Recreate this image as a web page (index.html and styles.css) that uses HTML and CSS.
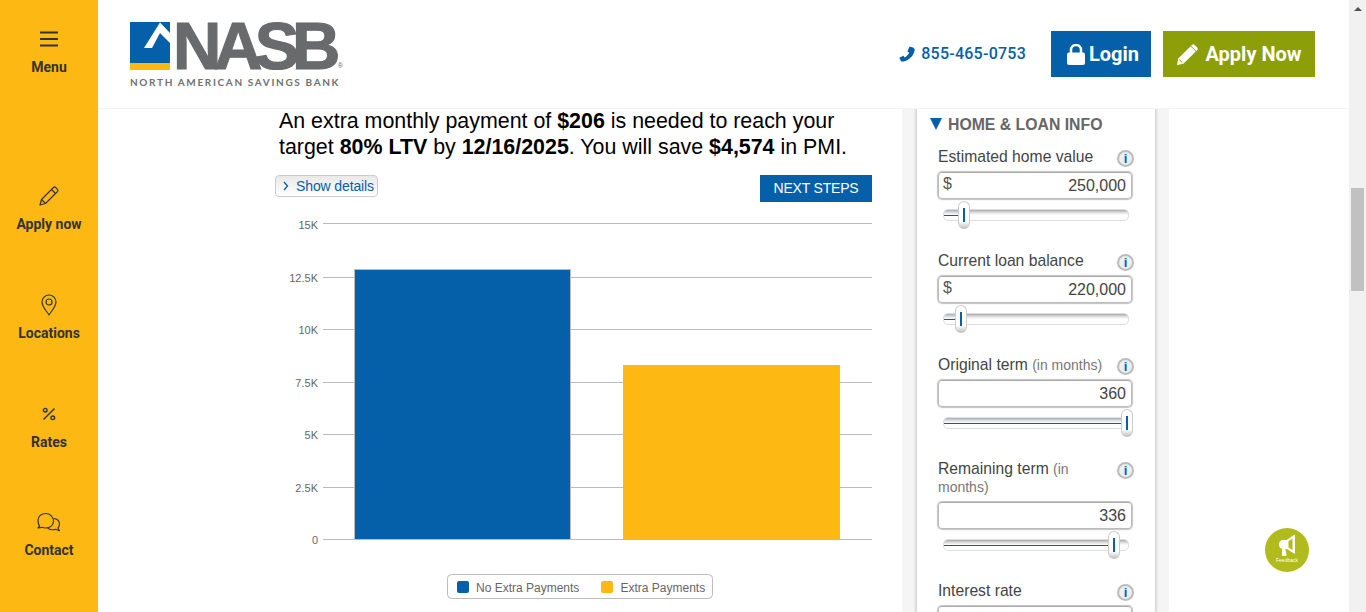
FILE: index.html
```html
<!DOCTYPE html>
<html lang="en">
<head>
<meta charset="UTF-8">
<meta name="viewport" content="width=device-width, initial-scale=1.0">
<title>PMI Calculator - NASB</title>
<link rel="stylesheet" href="styles.css">
</head>
<body>

<!-- Left rail -->
<nav class="rail">
    <a class="rail-item rail-menu">
        <span class="rail-icon"><svg width="18" height="16" viewBox="0 0 18 16"><path d="M0 1.500h18M0 8h18M0 14.500h18" fill="none" stroke="#333" stroke-width="2"/></svg></span>
        <span>Menu</span>
    </a>
    <a class="rail-item">
        <span class="rail-icon"><svg width="22" height="22" viewBox="0 0 22 22" fill="none" stroke="#333" stroke-width="1.200" stroke-linejoin="round"><path d="M2 20l1.500-5.500L15.500 2.500a1.600 1.600 0 0 1 2.200 0l1.800 1.800a1.600 1.600 0 0 1 0 2.200L7.500 18.500z"/><path d="M13.500 4.500l4 4M3.500 14.500l4 4"/></svg></span>
        <span>Apply now</span>
    </a>
    <a class="rail-item">
        <span class="rail-icon"><svg width="16" height="22" viewBox="0 0 16 22" fill="none" stroke="#333" stroke-width="1.200"><path d="M8 20.800C5 16.500 1 12.500 1 8a7 7 0 0 1 14 0c0 4.500-4 8.500-7 12.800z"/><circle cx="8" cy="8" r="3"/></svg></span>
        <span>Locations</span>
    </a>
    <a class="rail-item">
        <span class="rail-icon"><svg width="14" height="14" viewBox="0 0 14 14" fill="none" stroke="#333" stroke-width="1.400"><path d="M1.500 12.500L12.500 1.500"/><circle cx="3.200" cy="3.200" r="1.800"/><circle cx="10.800" cy="10.800" r="1.800"/></svg></span>
        <span>Rates</span>
    </a>
    <a class="rail-item">
        <span class="rail-icon"><svg width="24" height="20" viewBox="0 0 24 20" fill="none" stroke="#333" stroke-width="1.200" stroke-linejoin="round"><path d="M2.500 14.200l-1.500 1.800 4-.7c1.300.5 2.500.7 3.800.7 4.400 0 7.700-2.700 7.700-6.800S13.200 1.500 8.800 1.500 1 4.300 1 8.200c0 2.400.5 4.400 1.500 6z"/><path d="M16.300 6.500c3.300.3 6.200 2.300 6.200 5.500 0 1.700-.6 3-1.500 4.200l1.500 2.600-4-1.500c-2.800.8-6.500.2-8.500-2"/></svg></span>
        <span>Contact</span>
    </a>
</nav>

<div class="page">

    <!-- Header -->
    <header class="top">
        <a class="logo">
            <div class="logo-row">
                <svg class="logo-mark" width="40" height="48" viewBox="0 0 40 48"><rect width="40" height="41" fill="#055fa9"/><rect y="41" width="40" height="7" fill="#fdb813"/><path d="M30 .5L40 11v10L30 11 22 26h-8z" fill="#fff"/></svg>
                <span class="logo-word">NASB</span>
                <span class="logo-reg">®</span>
            </div>
            <div class="logo-sub">NORTH AMERICAN SAVINGS BANK</div>
        </a>
        <div class="top-actions">
            <a class="phone">
                <svg width="16" height="16" viewBox="0 0 16 16"><path d="M15.700 2.900c0 2.900-1.300 5.800-3.400 8-2.200 2.300-5 4-8 4.500-.7.100-1.400.200-2.100.100L.5 12.300c-.1-.3 0-.5.200-.7l3.200-1.700c.3-.100.500 0 .7.200l1 1.500c1.800-.9 3.700-2.900 4.600-4.800L8.800 5.800c-.2-.2-.3-.4-.2-.7L10.300 1.100c.1-.3.400-.4.700-.3l3.200.8c.3.100.5.300.6.600z" fill="#055fa9"/></svg>
                <span>855-465-0753</span>
            </a>
            <a class="btn btn-login">
                <svg width="18" height="21" viewBox="0 0 18 21"><path d="M4 9V6a5 5 0 0 1 10 0v3" fill="none" stroke="#fff" stroke-width="2.500"/><rect y="8.500" width="18" height="12.500" rx="2" fill="#fff"/></svg>
                <span>Login</span>
            </a>
            <a class="btn btn-apply">
                <svg width="21" height="21" viewBox="0 0 21 21"><path d="M0 21l1.200-6.400L13.600 2.200l5.200 5.200L6.400 19.800z" fill="#fff"/><path d="M15 .8a1.800 1.800 0 0 1 2.500 0l2.700 2.700a1.800 1.800 0 0 1 0 2.500L19.300 7l-5.300-5.300z" fill="#fff"/><path d="M2.200 15.500l3.300 3.300" stroke="#8c9e08" stroke-width="1"/></svg>
                <span>Apply Now</span>
            </a>
        </div>
    </header>

    <div class="content">

        <!-- Results -->
        <main class="results">
            <p class="summary">An extra monthly payment of <b>$206</b> is needed to reach your<br>target <b>80% LTV</b> by <b>12/16/2025</b>. You will save <b>$4,574</b> in PMI.</p>
            <div class="result-actions">
                <a class="details-btn"><svg width="6" height="10" viewBox="0 0 6 10"><path d="M1 1l3.500 4L1 9" fill="none" stroke="#055fa9" stroke-width="1.300"/></svg>Show details</a>
                <a class="next-btn">NEXT STEPS</a>
            </div>
            <svg class="chart" width="597" height="385" viewBox="275 215 597 385">
                <g stroke="#bbb" stroke-width="1">
                    <path d="M323 223.500h549M323 277.500h549M323 329.500h549M323 382.500h549M323 434.500h549M323 487.500h549M323 539.500h549"/>
                </g>
                <rect x="354.500" y="269.500" width="216" height="270" fill="#055fa9" stroke="#bbb" stroke-width="1"/>
                <rect x="623.500" y="365.500" width="216" height="174" fill="#fdb813" stroke="#bbb" stroke-width="1"/>
                <g class="chart-ticks" text-anchor="end">
                    <text x="318" y="229">15K</text>
                    <text x="318" y="282">12.5K</text>
                    <text x="318" y="334">10K</text>
                    <text x="318" y="387">7.5K</text>
                    <text x="318" y="439">5K</text>
                    <text x="318" y="492">2.5K</text>
                    <text x="318" y="544">0</text>
                </g>
                <rect x="447.500" y="574.500" width="265" height="24" rx="4" fill="#fff" stroke="#bbb"/>
                <rect x="457" y="581" width="12" height="12" rx="2" fill="#055fa9"/>
                <text class="chart-legend" x="476" y="592">No Extra Payments</text>
                <rect x="601" y="581" width="12" height="12" rx="2" fill="#fdb813"/>
                <text class="chart-legend" x="620.500" y="592">Extra Payments</text>
            </svg>
        </main>

        <!-- Inputs -->
        <div class="gutter">
            <aside class="panel">
                <h2 class="panel-title"><i class="caret"></i>HOME &amp; LOAN INFO</h2>

                <div class="field">
                    <div class="field-label"><label>Estimated home value</label><i class="info">i</i></div>
                    <div class="field-input"><span class="unit">$</span><span>250,000</span></div>
                    <div class="slider"><div class="slider-fill" style="width: 20px"></div><div class="slider-thumb" style="left: 14px"></div></div>
                </div>

                <div class="field">
                    <div class="field-label"><label>Current loan balance</label><i class="info">i</i></div>
                    <div class="field-input"><span class="unit">$</span><span>220,000</span></div>
                    <div class="slider"><div class="slider-fill" style="width: 17px"></div><div class="slider-thumb" style="left: 11px"></div></div>
                </div>

                <div class="field">
                    <div class="field-label"><label>Original term <small>(in months)</small></label><i class="info">i</i></div>
                    <div class="field-input"><span class="unit"></span><span>360</span></div>
                    <div class="slider"><div class="slider-fill" style="width: 183px"></div><div class="slider-thumb" style="left: 177px"></div></div>
                </div>

                <div class="field field-tall">
                    <div class="field-label"><label>Remaining term <small>(in months)</small></label><i class="info">i</i></div>
                    <div class="field-input"><span class="unit"></span><span>336</span></div>
                    <div class="slider"><div class="slider-fill" style="width: 170px"></div><div class="slider-thumb" style="left: 164px"></div></div>
                </div>

                <div class="field">
                    <div class="field-label"><label>Interest rate</label><i class="info">i</i></div>
                    <div class="field-input"><span class="unit"></span><span></span></div>
                </div>
            </aside>
        </div>

        <div class="filler"></div>
    </div>

    <a class="feedback">
        <svg width="16" height="21" viewBox="0 0 16 21"><path d="M15 0h1v18.500h-1L8 14H6.500l1 7H3V13.800C1 13.500 0 11.800 0 9.500 0 7 1.500 5 4 5h3.500z" fill="#fff"/><path d="M13.500 3.500L9.500 6.300v6l4 3z" fill="#b1bb1c"/></svg>
        <span>Feedback</span>
    </a>
</div>

<!-- Scrollbar -->
<div class="scrollbar">
    <i class="scroll-up"></i>
    <div class="scroll-thumb"></div>
</div>

</body>
</html>
```

FILE: styles.css
```css
/* Basic Reset */
* {
    box-sizing: border-box;
}

body {
    margin: 0;
    height: 612px;
    overflow: hidden;
    display: flex;
    font-family: "Liberation Sans", Arial, sans-serif;
    background-color: #fff;
    color: #000;
}

/* Left Rail */
.rail {
    width: 98px;
    flex: none;
    background-color: #fdb813;
    padding-top: 28px;
    display: flex;
    flex-direction: column;
    font-family: Roboto, sans-serif;
    font-size: 14px;
    line-height: 16px;
    font-weight: 700;
    color: #333;
}

.rail-item {
    flex: none;
    height: 108.800px;
    display: flex;
    flex-direction: column;
    align-items: center;
}

.rail-menu {
    height: 157px;
}

.rail-icon {
    height: 22px;
    margin-bottom: 9px;
    display: flex;
    align-items: center;
}

/* Header */
.page {
    flex: 1;
    min-width: 0;
    position: relative;
}

.top {
    height: 109px;
    border-bottom: 1px solid #f3f3f3;
    display: flex;
    justify-content: space-between;
    padding: 22px 34px 0 32px;
}

.logo-row {
    display: flex;
    height: 48px;
}

.logo-mark {
    display: block;
    flex: none;
}

.logo-word {
    font-size: 67px;
    line-height: 48px;
    font-weight: 700;
    letter-spacing: -7.500px;
    color: #696a6c;
    -webkit-text-stroke: 1.200px #696a6c;
    margin-left: 3px;
}

.logo-reg {
    font-size: 7px;
    line-height: 8px;
    color: #696a6c;
    align-self: flex-end;
    margin-left: 5px;
}

.logo-sub {
    margin-top: 6px;
    font-family: Lato, sans-serif;
    font-size: 10px;
    line-height: 12px;
    font-weight: 700;
    letter-spacing: 1.650px;
    color: #707172;
    white-space: nowrap;
}

.top-actions {
    display: flex;
    align-items: flex-start;
    padding-top: 9px;
    font-family: Roboto, sans-serif;
}

.phone {
    display: flex;
    align-items: center;
    gap: 6px;
    height: 45px;
    margin-right: 25px;
    font-size: 16px;
    font-weight: 500;
    letter-spacing: .25px;
    color: #055fa9;
}

.btn {
    display: flex;
    align-items: center;
    justify-content: center;
    height: 46px;
    font-size: 20px;
    font-weight: 700;
    color: #fff;
}

.btn-login {
    width: 100px;
    gap: 4px;
    padding-left: 4px;
    background-color: #055fa9;
    margin-right: 12px;
}

.btn-apply {
    width: 152px;
    gap: 7px;
    padding-left: 1px;
    background-color: #8c9e08;
}

/* Main Content */
.content {
    display: flex;
    height: 503px;
    overflow: hidden;
}

.results {
    width: 804px;
    flex: none;
    padding-left: 177px;
}

.summary {
    margin: -1px 0 15px 4px;
    font-size: 21.400px;
    line-height: 26px;
    white-space: nowrap;
}

.result-actions {
    display: flex;
    justify-content: space-between;
    align-items: flex-start;
    width: 597px;
    height: 40px;
}

.details-btn {
    display: flex;
    flex: none;
    align-items: center;
    gap: 7px;
    width: 103px;
    height: 22px;
    padding-left: 7px;
    border: 1px solid #ccc;
    border-radius: 4px;
    background: linear-gradient(#e9e9e9, #fff);
    font-size: 14px;
    letter-spacing: -.12px;
    white-space: nowrap;
    color: #055fa9;
}

.next-btn {
    width: 112px;
    height: 27px;
    line-height: 26px;
    text-align: center;
    background-color: #055fa9;
    font-size: 14px;
    letter-spacing: -.2px;
    color: #fff;
}

.chart {
    display: block;
}

.chart-ticks text {
    font-size: 11px;
    fill: #666;
}

.chart-legend {
    font-size: 12px;
    fill: #666;
}

/* Input Panel */
.gutter {
    width: 267px;
    flex: none;
    padding: 0 14px 0 15px;
    background-color: #f5f5f5;
}

.panel {
    height: 100%;
    padding: 6px 23px 0 21px;
    background-color: #fff;
    box-shadow: 0 0 3px 1px #c4c4c4;
}

.panel-title {
    display: flex;
    align-items: center;
    margin: 0 0 13px -8px;
    height: 20px;
    font-size: 15.800px;
    line-height: 20px;
    font-weight: 700;
    color: #666;
}

.caret {
    width: 0;
    height: 0;
    margin-right: 6px;
    margin-bottom: 3px;
    border-left: 6.500px solid transparent;
    border-right: 6.500px solid transparent;
    border-top: 12px solid #055fa9;
}

.field {
    height: 104px;
}

.field-tall {
    height: 122px;
}

.field-label {
    display: flex;
    justify-content: space-between;
    margin-bottom: 6px;
    font-size: 15.700px;
    line-height: 18px;
    color: #444;
}

.field-label small {
    font-size: 14px;
    color: #777;
}

.field-label label {
    width: 170px;
}

.info {
    flex: none;
    width: 17px;
    height: 17px;
    margin: 2px -2px -1px 0;
    border: 2px solid #bbb;
    border-radius: 50%;
    background-color: #eee;
    font-style: normal;
    font-size: 13px;
    font-weight: 700;
    line-height: 13px;
    text-align: center;
    color: #055fa9;
}

.field-input {
    display: flex;
    justify-content: space-between;
    width: 194px;
    height: 27px;
    padding: 3px 5px 3px 4px;
    border: 1px solid #bbb;
    border-top-color: #aaa;
    border-radius: 4px;
    box-shadow: 0 0 1px 1px #c4c4c4;
    font-size: 16px;
    line-height: 20px;
    color: #444;
}

.unit {
    font-size: 16px;
    line-height: 16px;
    color: #555;
}

.slider {
    position: relative;
    width: 186px;
    height: 12px;
    margin: 10px 0 0 5px;
    border: 1px solid #ddd;
    border-radius: 5px;
    background: linear-gradient(#aaa, #ddd 25%, #fff 50%);
}

.slider-fill {
    height: 6px;
    border-bottom: 1px solid #055fa9;
}

.slider-thumb {
    position: absolute;
    top: -9px;
    width: 12px;
    height: 28px;
    border: 1px solid #ccc;
    border-bottom: 0;
    border-radius: 6px;
    background: linear-gradient(#fff 72%, #bbb);
}

.slider-thumb::after {
    content: "";
    position: absolute;
    left: 4px;
    top: 6px;
    width: 2px;
    height: 14px;
    background-color: #055fa9;
}

.filler {
    flex: 1;
}

/* Feedback Bubble */
.feedback {
    position: absolute;
    left: 1167px;
    top: 528px;
    width: 44px;
    height: 44px;
    border-radius: 50%;
    background-color: #b1bb1c;
    display: flex;
    flex-direction: column;
    align-items: center;
    padding-top: 7px;
}

.feedback svg {
    display: block;
    flex: none;
}

.feedback span {
    font-size: 5px;
    line-height: 8px;
    color: #fff;
}

/* Scrollbar */
.scrollbar {
    width: 17px;
    flex: none;
    position: relative;
    background-color: #f1f1f1;
}

.scroll-up {
    position: absolute;
    left: 5px;
    top: 7px;
    border-left: 4px solid transparent;
    border-right: 4px solid transparent;
    border-bottom: 4px solid #505050;
}

.scroll-thumb {
    position: absolute;
    left: 2px;
    top: 188px;
    width: 13px;
    height: 103px;
    background-color: #c1c1c1;
}
```
